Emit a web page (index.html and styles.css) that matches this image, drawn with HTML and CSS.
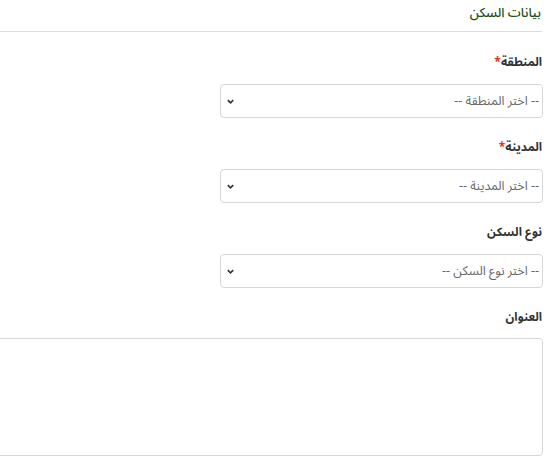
FILE: index.html
```html
<!DOCTYPE html>
<html lang="ar" dir="rtl">
<head>
<meta charset="utf-8">
<link rel="stylesheet" href="styles.css">
</head>
<body>
<div class="page">
  <h3 class="section-title">بيانات السكن</h3>
  <div class="form">
    <div class="group">
      <label class="label">المنطقة<span class="req">*</span></label>
      <div class="select">
        <span class="placeholder">-- اختر المنطقة --</span>
        <svg class="chev" viewBox="0 0 10 10" width="9" height="9"><path d="M2 3.5 L5 6.5 L8 3.5" fill="none" stroke="#333" stroke-width="1.8"/></svg>
      </div>
    </div>
    <div class="group">
      <label class="label">المدينة<span class="req">*</span></label>
      <div class="select">
        <span class="placeholder">-- اختر المدينة --</span>
        <svg class="chev" viewBox="0 0 10 10" width="9" height="9"><path d="M2 3.5 L5 6.5 L8 3.5" fill="none" stroke="#333" stroke-width="1.8"/></svg>
      </div>
    </div>
    <div class="group">
      <label class="label">نوع السكن</label>
      <div class="select">
        <span class="placeholder">-- اختر نوع السكن --</span>
        <svg class="chev" viewBox="0 0 10 10" width="9" height="9"><path d="M2 3.5 L5 6.5 L8 3.5" fill="none" stroke="#333" stroke-width="1.8"/></svg>
      </div>
    </div>
    <div class="group">
      <label class="label">العنوان</label>
      <div class="textarea"></div>
    </div>
  </div>
</div>
</body>
</html>
```
FILE: styles.css
```css
html, body {
  margin: 0;
  padding: 0;
  background: #fff;
}
body {
  font-family: "Noto Sans Arabic", "DejaVu Sans", "Noto Sans", sans-serif;
  color: #333;
  overflow: hidden;
  padding-right: 12px;
}
.page {
  padding-top: 4px;
}
.section-title {
  margin: 0;
  font-size: 13px;
  font-weight: 500;
  color: #1b4f20;
  line-height: 18px;
  padding-right: 1px;
  padding-bottom: 9px;
  border-bottom: 1px solid #ddd;
}
.form {
  display: flex;
  flex-direction: column;
  padding-top: 23px;
}
.group {
  display: flex;
  flex-direction: column;
  align-items: flex-start;
  margin-bottom: 22px;
}
.label {
  font-size: 12px;
  font-weight: bold;
  line-height: 16px;
  color: #333;
  margin-bottom: 13px;
}
.req {
  color: #e0352b;
}
.select {
  box-sizing: border-box;
  width: 323px;
  height: 34px;
  border: 1px solid #d6d6d6;
  border-radius: 4px;
  display: flex;
  align-items: center;
  justify-content: space-between;
  padding: 0 3px 0 5px;
  margin-right: -1px;
}
.placeholder {
  font-size: 12.5px;
  color: #666;
}
.chev {
  display: block;
}
.textarea {
  box-sizing: border-box;
  width: calc(100% + 8px);
  height: 118px;
  border: 1px solid #d6d6d6;
  border-radius: 4px;
  margin-left: -8px;
  margin-right: -1px;
  margin-top: -1px;
}
```
